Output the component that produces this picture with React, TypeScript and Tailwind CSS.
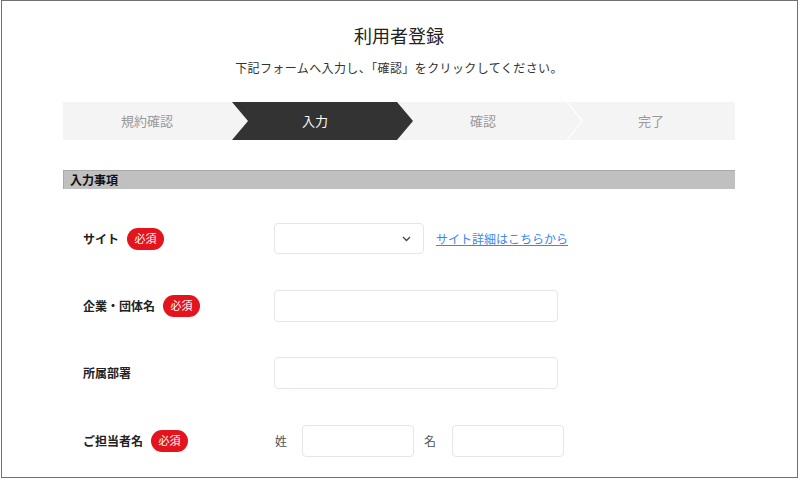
import React from "react";

const font = { fontFamily: '"Noto Sans CJK JP", "Noto Sans", sans-serif' };

function Badge() {
  return (
    <span className="ml-2 inline-flex h-[22px] w-[37px] items-center justify-center rounded-full bg-[#e3141b] text-[11px] text-white">
      必須
    </span>
  );
}

function Label({ text, required }: { text: string; required?: boolean }) {
  return (
    <div className="flex w-[191px] shrink-0 items-center">
      <span className="text-[12px] font-bold text-[#222]">{text}</span>
      {required && <Badge />}
    </div>
  );
}

export default function App() {
  return (
    <div className="h-[480px] w-[800px] overflow-hidden bg-white" style={font}>
      <div className="ml-[1px] h-[478px] w-[797px] border border-[#717171] bg-white">
        <div className="ml-[61px] flex w-[672px] flex-col">
          <h1 className="mt-[21px] text-center text-[18px] leading-[26px] text-[#222]">利用者登録</h1>
          <p className="mt-[10px] text-center text-[12px] leading-[20px] tracking-[0.4px] text-[#333]">
            下記フォームへ入力し、「確認」をクリックしてください。
          </p>

          <div className="mt-[24px] flex h-[38px] bg-[#f4f4f4]">
            <div className="flex flex-1 items-center justify-center text-[13px] text-[#999]">規約確認</div>
            <div className="relative flex flex-1 items-center justify-center text-[13px] text-white">
              <div className="absolute top-0 bottom-0 left-[1px] right-[-14px] bg-[#333] [clip-path:polygon(0_0,calc(100%-16px)_0,100%_50%,calc(100%-16px)_100%,0_100%,16px_50%)]" />
              <span className="relative">入力</span>
            </div>
            <div className="relative flex flex-1 items-center justify-center text-[13px] text-[#999]">
              確認
              <svg className="absolute top-0 right-[-16px]" width="17" height="38" viewBox="0 0 17 38">
                <polyline points="1,0 16,19 1,38" fill="none" stroke="#ffffff" strokeWidth="1.2" />
              </svg>
            </div>
            <div className="flex flex-1 items-center justify-center text-[13px] text-[#999]">完了</div>
          </div>

          <div className="mt-[30px] flex h-[19px] items-center border-t border-l border-[#a9a9a9] bg-[#c0c0c0] pl-[6px] text-[12px] font-bold text-[#111]">
            入力事項
          </div>

          <div className="mt-[34px] flex flex-col gap-[35.5px] pl-[20px]">
            <div className="flex h-[31px] items-center">
              <Label text="サイト" required />
              <div className="flex h-[31px] w-[150px] items-center justify-end rounded-[4px] border border-[#e3e6eb] bg-white pr-[12px]">
                <svg width="9" height="6" viewBox="0 0 9 6">
                  <polyline points="1,1 4.5,4.5 8,1" fill="none" stroke="#444" strokeWidth="1.3" />
                </svg>
              </div>
              <a className="ml-[12px] text-[12px] text-[#3d86ef] underline" href="#">
                サイト詳細はこちらから
              </a>
            </div>

            <div className="flex h-[32px] items-center">
              <Label text="企業・団体名" required />
              <div className="h-[32px] w-[284px] rounded-[4px] border border-[#e3e6eb] bg-white" />
            </div>

            <div className="flex h-[32px] items-center">
              <Label text="所属部署" />
              <div className="h-[32px] w-[284px] rounded-[4px] border border-[#e3e6eb] bg-white" />
            </div>

            <div className="flex h-[32px] items-center">
              <Label text="ご担当者名" required />
              <span className="ml-[1px] text-[12px] text-[#555]">姓</span>
              <div className="ml-[15px] h-[32px] w-[112px] rounded-[4px] border border-[#e3e6eb] bg-white" />
              <span className="ml-[10px] text-[12px] text-[#555]">名</span>
              <div className="ml-[16px] h-[32px] w-[112px] rounded-[4px] border border-[#e3e6eb] bg-white" />
            </div>
          </div>
        </div>
      </div>
    </div>
  );
}
